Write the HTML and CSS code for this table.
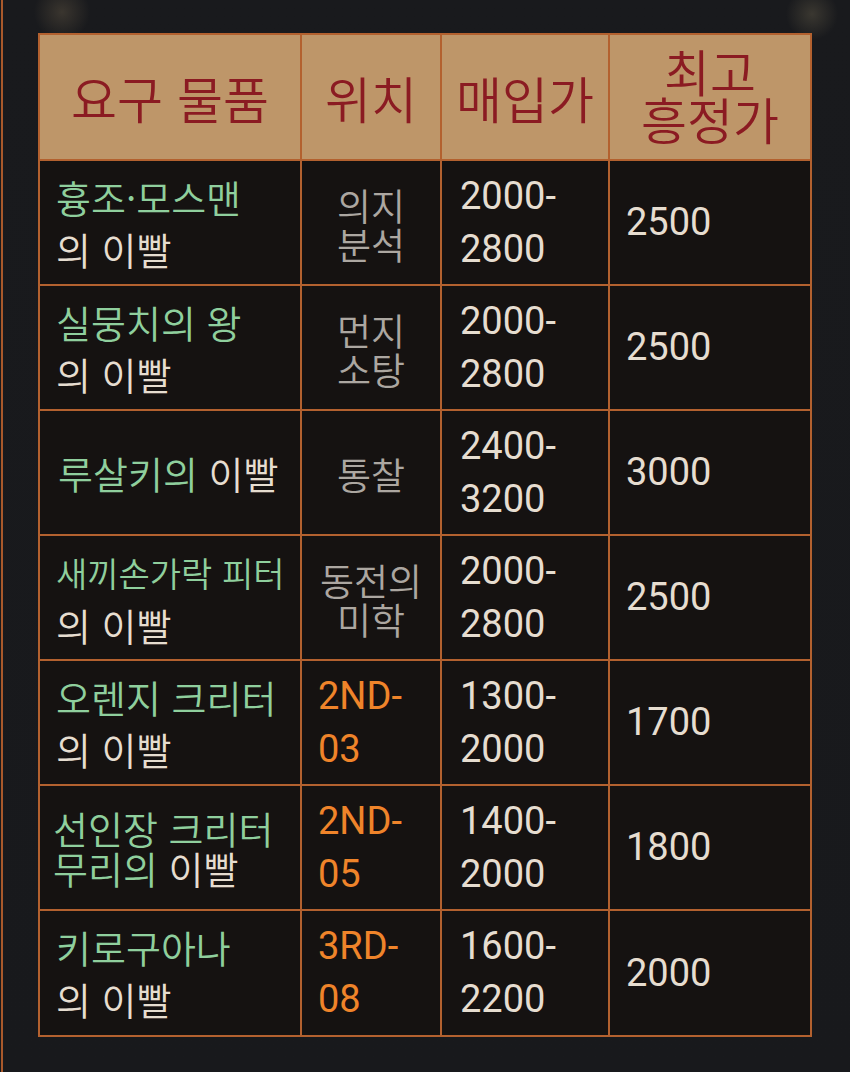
FILE: index.html
```html
<!DOCTYPE html>
<html lang="ko">
<head>
<meta charset="utf-8">
<link rel="stylesheet" href="styles.css">
</head>
<body>
<div class="page">
  <table class="teeth">
    <colgroup>
      <col class="c1"><col class="c2"><col class="c3"><col class="c4">
    </colgroup>
    <thead>
      <tr class="head">
        <th>요구 물품</th>
        <th>위치</th>
        <th>매입가</th>
        <th class="two">최고<br>흥정가</th>
      </tr>
    </thead>
    <tbody>
      <tr>
        <td class="name"><span class="g">흉조·모스맨</span><br>의 이빨</td>
        <td class="loc">의지<br>분석</td>
        <td class="num">2000-<br>2800</td>
        <td class="max">2500</td>
      </tr>
      <tr>
        <td class="name"><span class="g">실뭉치의 왕</span><br>의 이빨</td>
        <td class="loc">먼지<br>소탕</td>
        <td class="num">2000-<br>2800</td>
        <td class="max">2500</td>
      </tr>
      <tr>
        <td class="name one"><span class="g">루살키의</span> 이빨</td>
        <td class="loc">통찰</td>
        <td class="num">2400-<br>3200</td>
        <td class="max">3000</td>
      </tr>
      <tr>
        <td class="name"><span class="g small">새끼손가락 피터</span><br>의 이빨</td>
        <td class="loc">동전의<br>미학</td>
        <td class="num">2000-<br>2800</td>
        <td class="max">2500</td>
      </tr>
      <tr>
        <td class="name"><span class="g">오렌지 크리터</span><br>의 이빨</td>
        <td class="code">2ND-<br>03</td>
        <td class="num">1300-<br>2000</td>
        <td class="max">1700</td>
      </tr>
      <tr>
        <td class="name tight"><span class="g">선인장 크리터<br>무리의</span> 이빨</td>
        <td class="code">2ND-<br>05</td>
        <td class="num">1400-<br>2000</td>
        <td class="max">1800</td>
      </tr>
      <tr class="last">
        <td class="name"><span class="g">키로구아나</span><br>의 이빨</td>
        <td class="code">3RD-<br>08</td>
        <td class="num">1600-<br>2200</td>
        <td class="max">2000</td>
      </tr>
    </tbody>
  </table>
</div>
</body>
</html>
```
FILE: styles.css
```css
html, body {
  margin: 0;
  padding: 0;
}
body {
  width: 850px;
  height: 1072px;
  overflow: hidden;
  background:
    radial-gradient(circle at 62px 12px, rgba(120,105,80,0.35) 0, rgba(120,105,80,0) 28px),
    radial-gradient(circle at 812px 14px, rgba(120,110,85,0.35) 0, rgba(120,110,85,0) 26px),
    linear-gradient(180deg, #191a1d 0%, #18191c 100%);
}
.page {
  box-sizing: border-box;
  height: 1072px;
  margin-left: 1px;
  border-left: 2px solid #a9592b;
  padding: 33px 0 0 35px;
}
.teeth {
  table-layout: fixed;
  width: 774px;
  border-collapse: separate;
  border-spacing: 2px;
  background: #b3612f;
  font-family: Roboto, "Noto Sans CJK KR", sans-serif;
}
.c1 { width: 260px; }
.c2 { width: 138px; }
.c3 { width: 166px; }
.c4 { width: 200px; }

th, td {
  box-sizing: border-box;
  padding: 0;
  overflow: hidden;
}

.head th {
  height: 124px;
  background: #be9669;
  color: #8b1b22;
  font-family: "Noto Sans CJK KR", sans-serif;
  font-weight: 350;
  font-size: 50px;
  line-height: 48px;
  text-align: center;
  vertical-align: middle;
}
.head th.two { padding-bottom: 6px; }

tbody td {
  height: 123px;
  background: #151211;
  vertical-align: middle;
  color: #e6ddd0;
}
tbody tr.last td { height: 124px; }

.name {
  padding-left: 16px;
  font-family: "Noto Sans CJK KR", sans-serif;
  font-weight: 350;
  font-size: 38px;
  line-height: 52px;
  white-space: nowrap;
}
.name.one { padding-left: 18px; }
.name.tight { line-height: 40px; padding-left: 13px; }
.g { color: #8fcf9d; }
.g.small { font-size: 34px; }

.loc {
  text-align: center;
  color: #aca7a1;
  font-family: "Noto Sans CJK KR", sans-serif;
  font-weight: 350;
  font-size: 37px;
  line-height: 39px;
  padding-top: 4px;
  white-space: nowrap;
}
.code {
  padding-left: 16px;
  color: #ef842a;
  font-size: 38px;
  line-height: 53px;
}
.num {
  padding-left: 18px;
  font-size: 38px;
  line-height: 53px;
}
.max {
  padding-left: 16px;
  font-size: 38px;
  line-height: 53px;
}
```
